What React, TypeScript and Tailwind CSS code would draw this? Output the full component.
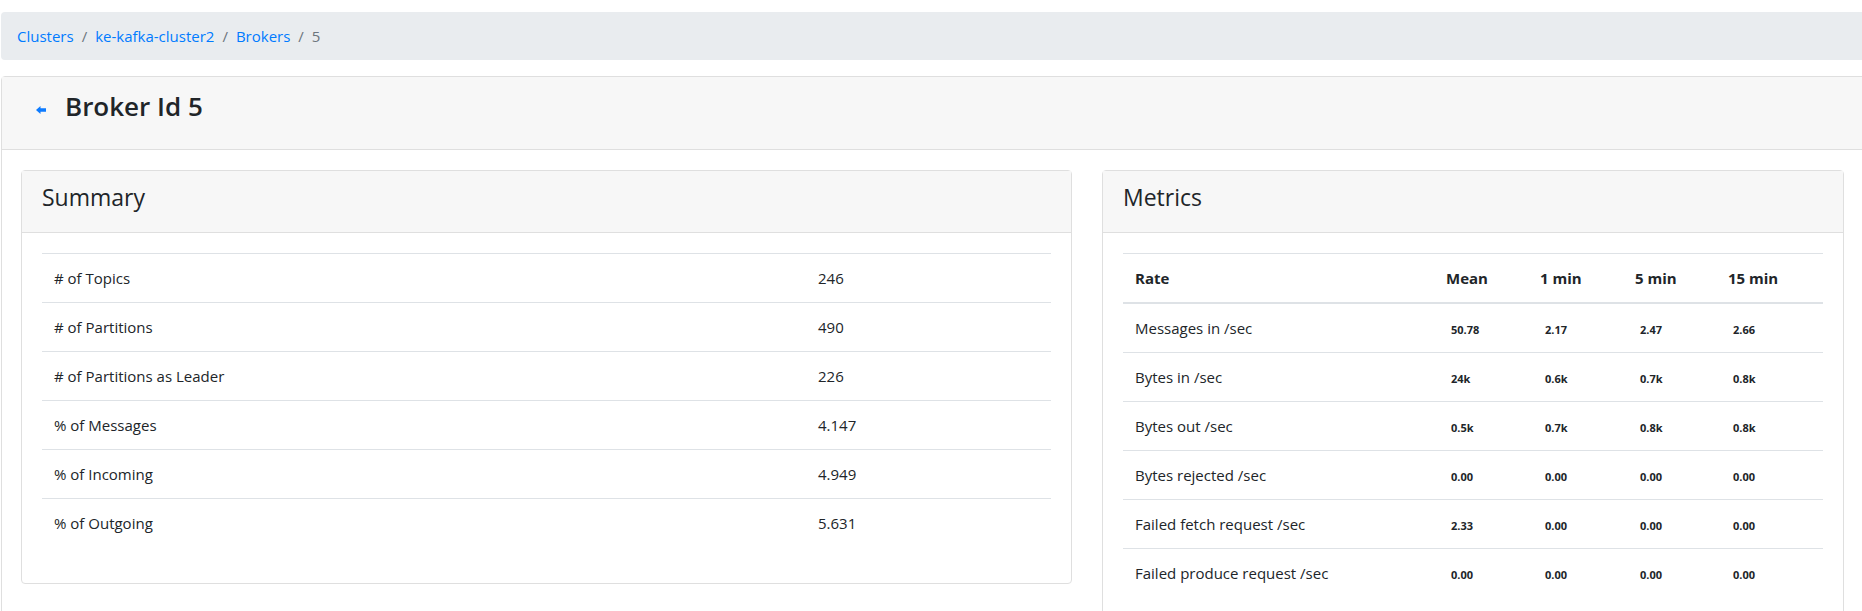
import React from "react";

const summary: [string, string][] = [
  ["# of Topics", "246"],
  ["# of Partitions", "490"],
  ["# of Partitions as Leader", "226"],
  ["% of Messages", "4.147"],
  ["% of Incoming", "4.949"],
  ["% of Outgoing", "5.631"],
];

const metrics: [string, string, string, string, string][] = [
  ["Messages in /sec", "50.78", "2.17", "2.47", "2.66"],
  ["Bytes in /sec", "24k", "0.6k", "0.7k", "0.8k"],
  ["Bytes out /sec", "0.5k", "0.7k", "0.8k", "0.8k"],
  ["Bytes rejected /sec", "0.00", "0.00", "0.00", "0.00"],
  ["Failed fetch request /sec", "2.33", "0.00", "0.00", "0.00"],
  ["Failed produce request /sec", "0.00", "0.00", "0.00", "0.00"],
];

function Sep() {
  return <span className="px-2 text-[#6c757d]">/</span>;
}

export default function App() {
  return (
    <div className="w-[1862px] h-[611px] overflow-hidden bg-white text-[#212529] font-['Open_Sans','Noto_Sans',sans-serif]">
      <div className="w-[1866px] pl-px pt-3">
        {/* breadcrumb */}
        <nav className="h-12 bg-[#e9ecef] rounded flex items-center px-4 text-[15px] leading-6 mb-4">
          <a className="text-[#007bff]">Clusters</a>
          <Sep />
          <a className="text-[#007bff]">ke-kafka-cluster2</a>
          <Sep />
          <a className="text-[#007bff]">Brokers</a>
          <Sep />
          <span className="text-[#6c757d]">5</span>
        </nav>

        {/* page card */}
        <div className="border border-[#dfdfdf] rounded">
          <div className="h-[73px] box-border bg-[#f7f7f7] border-b border-[#dfdfdf] pt-3 pl-[34px] flex items-start">
            <svg width="10" height="8" viewBox="0 0 10 8" className="mt-[17px] mr-[19px] shrink-0">
              <path d="M0 4 L4.5 0 L4.5 2.3 L10 2.3 L10 5.7 L4.5 5.7 L4.5 8 Z" fill="#0d7bff" />
            </svg>
            <h3 className="text-[26px] leading-[34px] font-semibold">Broker Id 5</h3>
          </div>

          <div className="p-5 pl-[19px] flex items-start gap-[30px]">
            {/* Summary */}
            <div className="w-[1051px] shrink-0 border border-[#dfdfdf] rounded">
              <div className="h-[62px] box-border bg-[#f7f7f7] border-b border-[#dfdfdf] pt-3 px-5">
                <h4 className="text-[23px] leading-[29px] font-medium">Summary</h4>
              </div>
              <div className="p-5">
                <table className="w-full table-fixed mb-4 text-[15px] leading-6">
                  <tbody>
                    {summary.map(([k, v]) => (
                      <tr key={k}>
                        <td className="w-[764px] border-t border-[#dee2e6] px-3 py-3">{k}</td>
                        <td className="border-t border-[#dee2e6] px-3 py-3">{v}</td>
                      </tr>
                    ))}
                  </tbody>
                </table>
              </div>
            </div>

            {/* Metrics */}
            <div className="w-[742px] shrink-0 border border-[#dfdfdf] rounded">
              <div className="h-[62px] box-border bg-[#f7f7f7] border-b border-[#dfdfdf] pt-3 px-5">
                <h4 className="text-[23px] leading-[29px] font-medium">Metrics</h4>
              </div>
              <div className="p-5">
                <table className="w-full table-fixed mb-4 text-[15px] leading-6">
                  <thead>
                    <tr>
                      <th className="w-[311px] text-left font-bold border-t border-b-2 border-[#dee2e6] px-3 py-3">Rate</th>
                      <th className="w-[94px] text-left font-bold border-t border-b-2 border-[#dee2e6] px-3 py-3">Mean</th>
                      <th className="w-[95px] text-left font-bold border-t border-b-2 border-[#dee2e6] px-3 py-3">1 min</th>
                      <th className="w-[93px] text-left font-bold border-t border-b-2 border-[#dee2e6] px-3 py-3">5 min</th>
                      <th className="text-left font-bold border-t border-b-2 border-[#dee2e6] px-3 py-3">15 min</th>
                    </tr>
                  </thead>
                  <tbody>
                    {metrics.map((r) => (
                      <tr key={r[0]}>
                        <td className="border-t border-[#dee2e6] px-3 py-3">{r[0]}</td>
                        {r.slice(1).map((v, i) => (
                          <td key={i} className="border-t border-[#dee2e6] px-3 py-3">
                            <span className="px-[5px] text-[11px] leading-none font-bold">{v}</span>
                          </td>
                        ))}
                      </tr>
                    ))}
                  </tbody>
                </table>
              </div>
            </div>
          </div>
        </div>
      </div>
    </div>
  );
}
